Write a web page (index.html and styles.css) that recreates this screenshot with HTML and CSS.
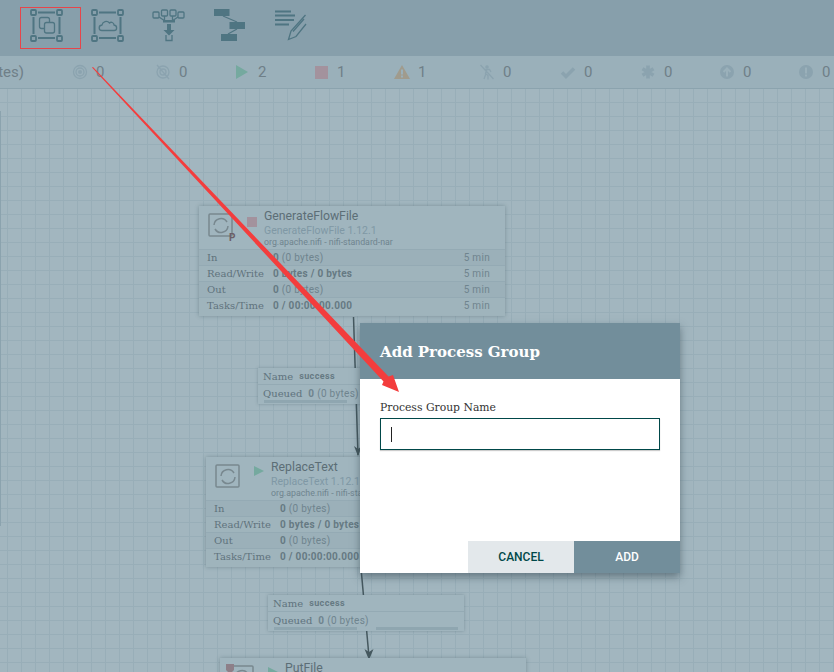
FILE: index.html
```html
<!DOCTYPE html>
<html lang="en">
<head>
  <meta charset="UTF-8">
  <meta name="viewport" content="width=device-width, initial-scale=1.0">
  <title>Add Process Group</title>
  <link rel="stylesheet" href="styles.css">
</head>
<body>
  <div class="page">
    <div class="toolbar">
      <div class="tool tool-selected">
        <svg viewBox="20 9 61 42">
          <g class="corners">
            <rect x="31" y="12" width="5" height="5" rx="1"/><rect x="57" y="12" width="5" height="5" rx="1"/>
            <rect x="31" y="38" width="5" height="5" rx="1"/><rect x="57" y="38" width="5" height="5" rx="1"/>
          </g>
          <path class="bars" d="M38 14.500H55M38 40H55M33.500 19V36M59.500 19V36"/>
          <rect class="thin" x="39.500" y="19.500" width="10" height="11" rx="2"/>
          <rect class="thin fill-bar" x="44.500" y="24.500" width="10" height="10.500" rx="2"/>
        </svg>
      </div>
      <div class="tool">
        <svg viewBox="81 9 61 42">
          <g class="corners">
            <rect x="92" y="12" width="5" height="5" rx="1"/><rect x="118" y="12" width="5" height="5" rx="1"/>
            <rect x="92" y="38" width="5" height="5" rx="1"/><rect x="118" y="38" width="5" height="5" rx="1"/>
          </g>
          <path class="bars" d="M99 14.500H116M99 40H116M94.500 19V36M120.500 19V36"/>
          <path class="thin" d="M102 32.500C98.500 32.500 98 27.500 102 27C102.500 23.500 107 22 109.500 25C111 23.500 114 24.500 114 27C117.500 27.500 117.500 32.500 114 32.500Z"/>
        </svg>
      </div>
      <div class="tool">
        <svg viewBox="142 9 61 42">
          <g class="thin">
            <rect x="153" y="14" width="6" height="6" rx="1"/><rect x="161.500" y="12" width="6" height="6" rx="1"/>
            <rect x="170" y="12" width="6" height="6" rx="1"/><rect x="178" y="14" width="6" height="6" rx="1"/>
            <path d="M159 19L165 23M164.500 18V23M172.500 18V23M178 19L172 23M166 37V42.500H172V37"/>
          </g>
          <path class="solid" d="M163 22H175V24.500H163ZM167 26H171V32H174.500L169 37.500L163.500 32H167Z"/>
        </svg>
      </div>
      <div class="tool">
        <svg viewBox="203 9 61 42">
          <path class="thin" d="M223 18L237 24M237 31L228 36"/>
          <rect class="solid" x="214" y="11" width="15.500" height="7"/>
          <rect class="solid" x="229.500" y="24" width="15.500" height="7"/>
          <rect class="solid" x="221" y="36" width="16" height="7"/>
        </svg>
      </div>
      <div class="tool">
        <svg viewBox="264 9 61 42">
          <path class="bars" d="M275 13.500H291M275 17.500H295M275 22H294M275 26.500H289"/>
          <path class="thin" d="M305.500 17L291 33L288.500 41.500L296 38.500L306 26M293 33.500L304 21"/>
        </svg>
      </div>
    </div>

    <div class="status">
      <div class="status-bytes"><span>0 / 0 bytes)</span></div>
      <div class="status-counts">
        <div class="count">
          <svg class="count-icon" viewBox="0 0 16 16"><circle class="ring" cx="8" cy="8" r="6.500"/><circle class="ring" cx="8" cy="8" r="4"/><circle cx="8" cy="8" r="2"/></svg><span>0</span>
        </div>
        <div class="count">
          <svg class="count-icon" viewBox="0 0 16 16"><circle class="ring" cx="8" cy="8" r="6"/><circle class="ring" cx="8" cy="8" r="3"/><path class="ring" d="M2 1L14 15"/></svg><span>0</span>
        </div>
        <div class="count">
          <svg class="count-icon" viewBox="0 0 16 16"><path class="play" d="M2 1L14 8L2 15Z"/></svg><span>2</span>
        </div>
        <div class="count">
          <svg class="count-icon" viewBox="0 0 16 16"><rect class="stop" x="2" y="2" width="13" height="13"/></svg><span>1</span>
        </div>
        <div class="count">
          <svg class="count-icon" viewBox="0 0 16 16"><path class="warn" d="M8 1L16 15H0Z"/><path class="warn-mark" d="M7 5.500H9V10.500H7ZM7 11.500H9V13.500H7Z"/></svg><span>1</span>
        </div>
        <div class="count">
          <svg class="count-icon" viewBox="0 0 16 16"><circle cx="8" cy="3" r="1.800"/><path class="ring" d="M8 5L6.500 9.500L9 11.500V15.500M7 9.500L5 15M5 5.500H10.500L12 8M1.500 1L14.500 15"/></svg><span>0</span>
        </div>
        <div class="count">
          <svg class="count-icon" viewBox="0 0 16 16"><path class="tick" d="M2 8.500L6 12.500L14 4.500"/></svg><span>0</span>
        </div>
        <div class="count">
          <svg class="count-icon" viewBox="0 0 16 16"><path class="star" d="M8 1.500V14.500M2.500 4.800L13.500 11.200M13.500 4.800L2.500 11.200"/></svg><span>0</span>
        </div>
        <div class="count">
          <svg class="count-icon" viewBox="0 0 16 16"><circle cx="8" cy="8" r="7"/><path class="cut-line" d="M4.500 8L8 4.500L11.500 8M8 5V12.500"/></svg><span>0</span>
        </div>
        <div class="count">
          <svg class="count-icon" viewBox="0 0 16 16"><circle cx="8" cy="8" r="7"/><path class="cut-fill" d="M7 3.500H9V9.500H7ZM7 10.500H9V12.500H7Z"/></svg><span>0</span>
        </div>
      </div>
    </div>

    <div class="canvas">
      <div class="canvas-edge"></div>
      <svg class="links" viewBox="0 0 834 584">
        <path class="link" d="M353.500 228L358 366"/>
        <path class="link-head" d="M354 357L358 367L362 357L358 360Z"/>
        <path class="link" d="M361 479L369 568"/>
        <path class="link-head" d="M364.500 560L369 571L373.500 560L369 563Z"/>
      </svg>

      <div class="node node-generate">
        <div class="node-head">
          <svg class="proc-icon" viewBox="0 0 26 26">
            <rect x="1" y="1" width="23" height="22" rx="1"/>
            <path d="M6 12A7 7 0 0 1 19 9M20 13A7 7 0 0 1 7 16"/>
          </svg>
          <span class="proc-badge">P</span>
          <span class="run-stop"></span>
          <div class="node-titles">
            <div class="node-name">GenerateFlowFile</div>
            <div class="node-type">GenerateFlowFile 1.12.1</div>
            <div class="node-bundle">org.apache.nifi - nifi-standard-nar</div>
          </div>
        </div>
        <div class="row"><span class="row-label">In</span><span class="row-value"><b>0</b> (0 bytes)</span><span class="row-age">5 min</span></div>
        <div class="row row-alt"><span class="row-label">Read/Write</span><span class="row-value"><b>0 bytes / 0 bytes</b></span><span class="row-age">5 min</span></div>
        <div class="row"><span class="row-label">Out</span><span class="row-value"><b>0</b> (0 bytes)</span><span class="row-age">5 min</span></div>
        <div class="row row-alt row-last"><span class="row-label">Tasks/Time</span><span class="row-value"><b>0 / 00:00:00.000</b></span><span class="row-age">5 min</span></div>
      </div>

      <div class="node node-replace">
        <div class="node-head">
          <svg class="proc-icon" viewBox="0 0 26 26">
            <rect x="1" y="1" width="23" height="22" rx="1"/>
            <path d="M6 12A7 7 0 0 1 19 9M20 13A7 7 0 0 1 7 16"/>
          </svg>
          <span class="run-play"></span>
          <div class="node-titles">
            <div class="node-name">ReplaceText</div>
            <div class="node-type">ReplaceText 1.12.1</div>
            <div class="node-bundle">org.apache.nifi - nifi-standard-nar</div>
          </div>
        </div>
        <div class="row"><span class="row-label">In</span><span class="row-value"><b>0</b> (0 bytes)</span><span class="row-age">5 min</span></div>
        <div class="row row-alt"><span class="row-label">Read/Write</span><span class="row-value"><b>0 bytes / 0 bytes</b></span><span class="row-age">5 min</span></div>
        <div class="row"><span class="row-label">Out</span><span class="row-value"><b>0</b> (0 bytes)</span><span class="row-age">5 min</span></div>
        <div class="row row-alt row-last"><span class="row-label">Tasks/Time</span><span class="row-value"><b>0 / 00:00:00.000</b></span><span class="row-age">5 min</span></div>
      </div>

      <div class="node node-put">
        <div class="node-head">
          <svg class="proc-shield" viewBox="0 0 8 10"><path d="M0 0H8V6L4 10L0 6Z"/></svg>
          <svg class="proc-icon" viewBox="0 0 26 26">
            <rect x="1" y="1" width="23" height="22" rx="1"/>
            <path d="M6 12A7 7 0 0 1 19 9M20 13A7 7 0 0 1 7 16"/>
          </svg>
          <span class="run-play"></span>
          <div class="node-titles">
            <div class="node-name">PutFile</div>
          </div>
        </div>
      </div>

      <div class="conn conn-first">
        <div class="conn-row conn-name"><span class="conn-label">Name</span><b>success</b></div>
        <div class="conn-row"><span class="conn-label">Queued</span><span class="conn-value"><b>0</b> (0 bytes)</span></div>
        <div class="conn-bars"><i></i><i></i></div>
      </div>
      <div class="conn conn-second">
        <div class="conn-row conn-name"><span class="conn-label">Name</span><b>success</b></div>
        <div class="conn-row"><span class="conn-label">Queued</span><span class="conn-value"><b>0</b> (0 bytes)</span></div>
        <div class="conn-bars"><i></i><i></i></div>
      </div>
    </div>

    <div class="dialog">
      <div class="dialog-head">Add Process Group</div>
      <div class="dialog-body">
        <label class="field-label" for="group-name">Process Group Name</label>
        <div class="field" id="group-name"><span class="caret"></span></div>
      </div>
      <div class="dialog-foot">
        <button class="btn btn-cancel">CANCEL</button>
        <button class="btn btn-add">ADD</button>
      </div>
    </div>

    <svg class="annotation" viewBox="0 0 834 672">
      <path d="M92 67.500L93 67L388.500 376.600L393 375L399 392L382 385L383.500 381.400Z"/>
    </svg>
  </div>
</body>
</html>
```

FILE: styles.css
```css
html, body {
  margin: 0;
  padding: 0;
}
body {
  font-family: Roboto, sans-serif;
  background: #a2b6bf;
}
.page {
  position: relative;
  width: 834px;
  height: 672px;
  overflow: hidden;
  display: flex;
  flex-direction: column;
}

/* toolbar */
.toolbar {
  height: 56px;
  flex: none;
  display: flex;
  align-items: center;
  padding-left: 20px;
  box-sizing: border-box;
  background: #879fab;
}
.tool {
  width: 61px;
  height: 42px;
  box-sizing: border-box;
}
.tool svg {
  display: block;
  width: 61px;
  height: 42px;
  fill: none;
}
.tool-selected {
  outline: 1px solid #e6454a;
  outline-offset: -1px;
}
.corners rect {
  fill: none;
  stroke: #4f7582;
  stroke-width: 1.800;
}
.thin {
  fill: none;
  stroke: #4f7582;
  stroke-width: 1.300;
}
.thin rect, .thin path {
  fill: none;
}
.fill-bar {
  fill: #879fab;
}
.bars {
  stroke: #4f7582;
  stroke-width: 2;
  fill: none;
}
.solid {
  fill: #4f7582;
}

/* status bar */
.status {
  height: 33px;
  flex: none;
  display: flex;
  align-items: center;
  box-sizing: border-box;
  background: #9ab0ba;
  border-bottom: 1px solid #8ba3ae;
  color: #6f7f88;
  font-size: 15px;
}
.status-bytes {
  width: 24px;
  margin-right: 48px;
  flex: none;
  display: flex;
  justify-content: flex-end;
  overflow: hidden;
  white-space: nowrap;
}
.status-counts {
  display: grid;
  grid-template-columns: 83px 79px 79px 81px 85px 81px 80px 79px 79px 40px;
}
.count {
  display: flex;
  align-items: center;
  gap: 8px;
}
.count-icon {
  width: 16px;
  height: 16px;
  flex: none;
  fill: #8ba3af;
}
.ring {
  fill: none;
  stroke: #8ba3af;
  stroke-width: 1.300;
}
.play {
  fill: #75a99f;
}
.stop {
  fill: #a3929d;
}
.warn {
  fill: #a09b8d;
}
.warn-mark, .cut-fill {
  fill: #9ab0ba;
}
.tick {
  fill: none;
  stroke: #8ba3af;
  stroke-width: 3.500;
}
.star {
  fill: none;
  stroke: #8ba3af;
  stroke-width: 3.600;
}
.cut-line {
  fill: none;
  stroke: #9ab0ba;
  stroke-width: 2;
}

/* canvas */
.canvas {
  position: relative;
  flex: 1;
  background-color: #a2b6bf;
  background-image:
    linear-gradient(to right, #98aeb8 1px, transparent 1px),
    linear-gradient(to bottom, #98aeb8 1px, transparent 1px);
  background-size: 14px 14px;
  background-position: 7px 13px;
}
.canvas-edge {
  position: absolute;
  left: 0;
  top: 22px;
  width: 1px;
  height: 415px;
  background: #8ba3ae;
}
.links {
  position: absolute;
  left: 0;
  top: 0;
  width: 834px;
  height: 584px;
}
.link {
  stroke: #45585f;
  stroke-width: 1.500;
  fill: none;
}
.link-head {
  fill: #45585f;
}

/* processors */
.node {
  position: absolute;
  width: 306px;
  background: #a0b5be;
  box-shadow: 0 0 4px rgba(70, 95, 105, 0.45);
}
.node-generate {
  left: 199px;
  top: 117px;
}
.node-replace {
  left: 206px;
  top: 368px;
}
.node-put {
  left: 220px;
  top: 569px;
}
.node-head {
  position: relative;
  height: 43px;
  padding-left: 65px;
  box-sizing: border-box;
}
.proc-icon {
  position: absolute;
  left: 9px;
  top: 7px;
  width: 26px;
  height: 26px;
  fill: none;
  stroke: #78888f;
  stroke-width: 1.500;
}
.proc-shield {
  position: absolute;
  left: 6px;
  top: 6px;
  width: 8px;
  height: 10px;
  z-index: 1;
  fill: #8d7f88;
}
.proc-badge {
  position: absolute;
  left: 30px;
  top: 26px;
  font-size: 10px;
  font-weight: 700;
  color: #6b5e67;
}
.run-stop {
  position: absolute;
  left: 48px;
  top: 11px;
  width: 10px;
  height: 10px;
  background: #a3929d;
}
.run-play {
  position: absolute;
  left: 48px;
  top: 9px;
  width: 0;
  height: 0;
  border-left: 10px solid #75a99f;
  border-top: 5.500px solid transparent;
  border-bottom: 5.500px solid transparent;
}
.node-titles {
  padding-top: 3px;
}
.node-name {
  font-size: 12.250px;
  line-height: 15px;
  color: #5c6e76;
}
.node-type {
  font-size: 10.500px;
  line-height: 13px;
  color: #7f98a5;
}
.node-bundle {
  font-size: 8.800px;
  line-height: 10px;
  color: #6f848e;
}
.row {
  height: 16px;
  display: flex;
  align-items: center;
  padding: 0 15px 1px 8px;
  box-sizing: border-box;
  border-top: 1px solid #94aab4;
  background: #9bb0b9;
  font-size: 10px;
  letter-spacing: 0.300px;
  color: #6f848e;
}
.row-alt {
  background: #9fb4bc;
}
.row-last {
  height: 19px;
  padding-bottom: 4px;
}
.row-label {
  width: 66px;
  flex: none;
  font-family: "DejaVu Serif", serif;
  font-size: 10px;
  letter-spacing: 0;
  color: #5f737d;
}
.row-value {
  flex: 1;
  white-space: nowrap;
}
.row-value b {
  color: #667a83;
}

/* connection labels */
.conn {
  position: absolute;
  width: 196px;
  padding-bottom: 2px;
  background: #a0b5be;
  box-shadow: 0 0 3px rgba(70, 95, 105, 0.4);
  font-size: 10px;
  color: #6f848e;
}
.conn-first {
  left: 258px;
  top: 279px;
}
.conn-second {
  left: 268px;
  top: 506px;
}
.conn-row {
  height: 17px;
  display: flex;
  align-items: center;
  gap: 6px;
  padding-left: 5px;
  box-sizing: border-box;
}
.conn-name {
  border-bottom: 1px solid #94aab4;
}
.conn-name b {
  font-size: 9px;
  letter-spacing: 0.400px;
  color: #667a83;
}
.conn-label {
  font-family: "DejaVu Serif", serif;
  font-size: 10px;
  color: #5f737d;
}
.conn-value {
  letter-spacing: 0.300px;
}
.conn-bars {
  position: absolute;
  left: 6px;
  right: 6px;
  bottom: 1px;
  display: flex;
  gap: 19px;
}
.conn-bars i {
  flex: 1;
  height: 3px;
  background: #8fa6b0;
}

/* dialog */
.dialog {
  position: absolute;
  left: 360px;
  top: 323px;
  width: 320px;
  height: 250px;
  display: flex;
  flex-direction: column;
  background: #fff;
  box-shadow: 0 4px 8px rgba(40, 60, 70, 0.5);
}
.dialog-head {
  height: 56px;
  flex: none;
  display: flex;
  align-items: center;
  padding: 1px 0 0 20px;
  box-sizing: border-box;
  background: #728e9b;
  color: #fff;
  font-family: "DejaVu Serif", serif;
  font-size: 15px;
  font-weight: 700;
}
.dialog-body {
  flex: 1;
  padding: 22px 20px 0;
}
.field-label {
  display: block;
  font-family: "DejaVu Serif", serif;
  font-size: 10.800px;
  line-height: 14px;
  margin-bottom: 3px;
  color: #333;
}
.field {
  height: 32px;
  display: flex;
  align-items: center;
  padding-left: 10px;
  box-sizing: border-box;
  border: 1px solid #004849;
  box-shadow: 0 1px 1px rgba(0, 0, 0, 0.2);
}
.caret {
  width: 1px;
  height: 15px;
  background: #222;
}
.dialog-foot {
  display: flex;
  justify-content: flex-end;
}
.btn {
  width: 106px;
  height: 32px;
  padding: 0;
  border: none;
  font-family: Roboto, sans-serif;
  font-size: 12px;
  font-weight: 500;
}
.btn-cancel {
  background: #e3e8eb;
  color: #004849;
}
.btn-add {
  background: #728e9b;
  color: #fff;
}

/* red arrow drawn over the screenshot */
.annotation {
  position: absolute;
  left: 0;
  top: 0;
  width: 834px;
  height: 672px;
  pointer-events: none;
}
.annotation path {
  fill: #f33d3d;
}
```
